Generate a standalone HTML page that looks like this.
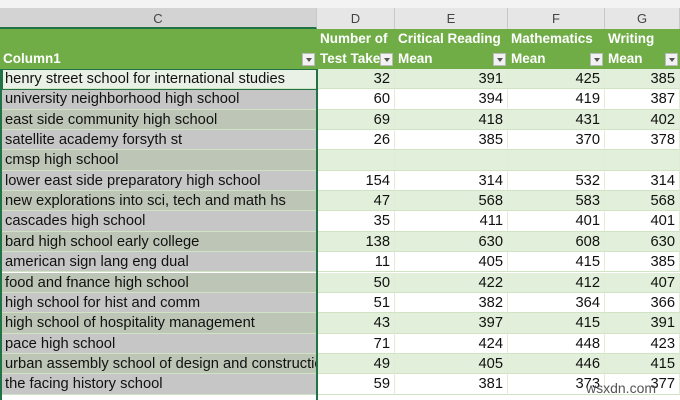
<!DOCTYPE html>
<html><head><style>
*{margin:0;padding:0;box-sizing:border-box}
body{width:680px;height:400px;overflow:hidden;background:#fff;font-family:"Liberation Sans",sans-serif;position:relative}
.a{position:absolute}
.colh{top:8px;height:21px;background:#e6e6e6;border-right:1px solid #c8c8c8;color:#444;font-size:13px;text-align:center;line-height:21px}
.hdr{top:29px;height:40px;background:#70ad47;color:#fff;font-weight:bold;font-size:13.5px;line-height:20px;padding-left:3px;white-space:nowrap;overflow:hidden}
.dd{position:absolute;right:2px;bottom:3px;width:13px;height:13px;background:#f2f2f2;border:1px solid #bbb}
.dd:after{content:"";position:absolute;left:3px;top:4px;border:3px solid transparent;border-top:4px solid #555}
.r{position:absolute;height:20.35px;font-size:14.7px;line-height:20px;white-space:nowrap;overflow:hidden;border-bottom:1px solid #d0e3c4;color:#111}
.n{text-align:right;padding-right:4px}
</style></head><body>
<div class="a" style="left:0;top:0;width:680px;height:8px;background:#f3f3f3"></div>
<div class="a colh" style="left:0;width:317px;background:#d3d3d3;border-bottom:2px solid #217346">C</div>
<div class="a colh" style="left:317px;width:78px">D</div>
<div class="a colh" style="left:395px;width:113px">E</div>
<div class="a colh" style="left:508px;width:97px">F</div>
<div class="a colh" style="left:605px;width:75px">G</div>
<div class="a hdr" style="left:0;width:317px"><br>Column1<span class="dd"></span></div>
<div class="a hdr" style="left:317px;width:78px">Number of<br>Test Take<span class="dd"></span></div>
<div class="a hdr" style="left:395px;width:113px">Critical Reading<br>Mean<span class="dd"></span></div>
<div class="a hdr" style="left:508px;width:97px">Mathematics<br>Mean<span class="dd"></span></div>
<div class="a hdr" style="left:605px;width:75px">Writing<br>Mean<span class="dd"></span></div>
<div id="t"></div>
<div class="a" style="left:0;top:69px;width:2px;height:331px;background:#217346"></div>
<div class="a" style="left:316px;top:69px;width:2px;height:331px;background:#217346"></div>
<div class="a" style="left:2px;top:69px;width:315px;height:21px;border:1px solid #217346"></div>
<script>
var d=[["henry street school for international studies",32,391,425,385],["university neighborhood high school",60,394,419,387],["east side community high school",69,418,431,402],["satellite academy forsyth st",26,385,370,378],["cmsp high school","","","",""],["lower east side preparatory high school",154,314,532,314],["new explorations into sci, tech and math hs",47,568,583,568],["cascades high school",35,411,401,401],["bard high school early college",138,630,608,630],["american sign lang eng dual",11,405,415,385],["food and fnance high school",50,422,412,407],["high school for hist and comm",51,382,364,366],["high school of hospitality management",43,397,415,391],["pace high school",71,424,448,423],["urban assembly school of design and constructio",49,405,446,415],["the facing history school",59,381,373,377]];
var x=[0,317,395,508,605,680],h="";
d.forEach(function(r,i){var y=69+i*20.35,odd=i%2==0;
for(var c=0;c<5;c++){var bg=c==0?(i==0?"#e9f0e5":(odd?"#bcc5b6":"#c6c6c6")):(odd?"#e2efda":"#fff");
h+='<div class="r'+(c?' n':'')+'" style="left:'+x[c]+'px;width:'+(x[c+1]-x[c])+'px;top:'+y+'px;background:'+bg+';'+(c==0?'padding-left:5px;':'border-right:1px solid #e0ecd8;')+'">'+r[c]+'</div>';}});
document.getElementById("t").innerHTML=h;
</script>
<div class="a" style="left:586px;top:380px;font-size:14px;color:#555">wsxdn.com</div>
</body></html>
